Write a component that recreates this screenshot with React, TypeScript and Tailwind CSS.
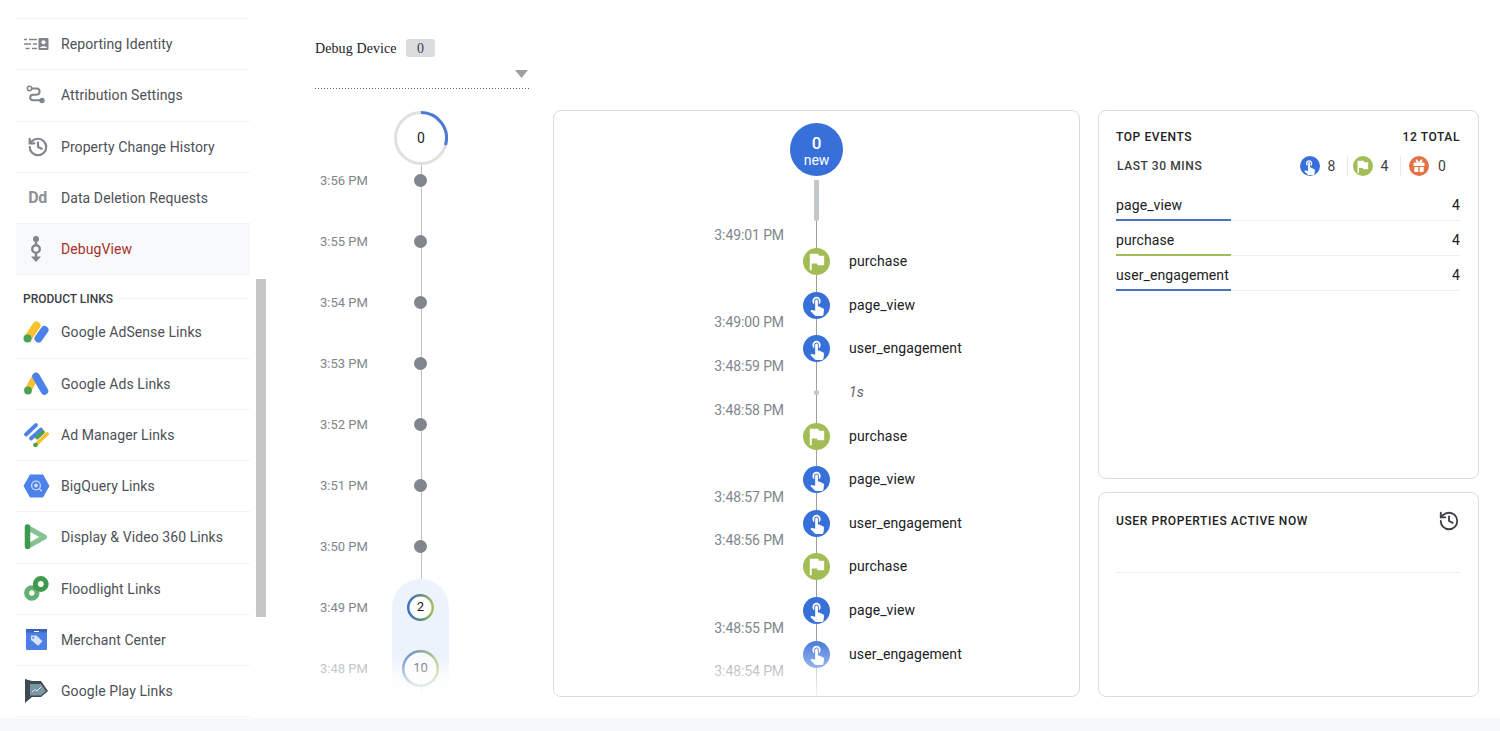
import React from "react";
import { MdTouchApp, MdFlag } from "react-icons/md";
import { History } from "lucide-react";

const rowCls = "flex h-[51.25px] items-center border-b border-[#f1f3f4]";

function ReportingIcon() {
  return (
    <svg width="26" height="14" viewBox="0 0 26 14">
      <g stroke="#80868b" strokeWidth="1.7">
        <path d="M1 2.5h3M6 2.5h8M1 7h7M10 7h4M2.5 11.5h4M9 11.5h5" />
      </g>
      <rect x="15.5" y="1" width="10" height="12" rx="1" fill="#80868b" />
      <circle cx="20.5" cy="5.2" r="2" fill="#fff" />
      <path d="M17 11c.4-2.4 6.6-2.4 7 0z" fill="#fff" />
    </svg>
  );
}
function AttributionIcon() {
  return (
    <svg width="20" height="20" viewBox="0 0 20 20" fill="none">
      <circle cx="3.5" cy="3.5" r="2.2" stroke="#80868b" strokeWidth="1.5" />
      <path d="M5.5 3.5h5a3 3 0 0 1 0 6.2H7a2.7 2.7 0 0 0 0 5.6h7" stroke="#80868b" strokeWidth="2" />
      <circle cx="16" cy="15.5" r="2.7" fill="#80868b" />
    </svg>
  );
}
function DebugIcon() {
  return (
    <svg width="12" height="26" viewBox="0 0 12 26" fill="none">
      <circle cx="6" cy="3" r="3" fill="#80868b" />
      <path d="M6 5v4M6 17.5v4" stroke="#80868b" strokeWidth="2.4" />
      <circle cx="6" cy="13" r="3.8" stroke="#80868b" strokeWidth="2.4" />
      <path d="M1 20.5h10L6 26z" fill="#80868b" />
    </svg>
  );
}
function AdSenseIcon() {
  return (
    <svg width="26" height="22" viewBox="0 0 26 22">
      <path d="M5 17 13.5 4.5" stroke="#f9c231" strokeWidth="8" strokeLinecap="round" />
      <path d="M15.5 17.5 21.5 9" stroke="#4c82ea" strokeWidth="8" strokeLinecap="round" />
      <circle cx="4.5" cy="17.5" r="4" fill="#4ba154" />
    </svg>
  );
}
function AdsIcon() {
  return (
    <svg width="26" height="24" viewBox="0 0 26 24">
      <path d="M13 4 5 18" stroke="#f9c231" strokeWidth="7" strokeLinecap="round" />
      <path d="M13 4.5 21.5 19" stroke="#4c82ea" strokeWidth="7.5" strokeLinecap="round" />
      <circle cx="5" cy="18.5" r="3.9" fill="#4ba154" />
    </svg>
  );
}
function AdManagerIcon() {
  return (
    <svg width="26" height="26" viewBox="0 0 26 26" strokeLinecap="round" fill="none">
      <path d="M3 12.5 13 3" stroke="#4c82ea" strokeWidth="3.8" />
      <path d="M8 16.5 18 7.5" stroke="#4c82ea" strokeWidth="3.8" />
      <path d="M14 15.5l6-5.5" stroke="#4ba154" strokeWidth="3.8" />
      <path d="M13 22.5 24 12" stroke="#f9c231" strokeWidth="3.8" />
      <circle cx="12.5" cy="23" r="2.3" fill="#4ba154" />
    </svg>
  );
}
function BigQueryIcon() {
  return (
    <svg width="27" height="24" viewBox="0 0 27 24" fill="none">
      <path d="M7 .5h13L26.5 12 20 23.5H7L.5 12z" fill="#4c82ea" />
      <circle cx="13" cy="11.5" r="4.4" stroke="#c9dafb" strokeWidth="1.3" />
      <circle cx="13" cy="11.5" r="1.9" fill="#c9dafb" />
      <path d="M16 14.5 18.8 17.2" stroke="#c9dafb" strokeWidth="1.4" />
    </svg>
  );
}
function DisplayIcon() {
  return (
    <svg width="24" height="26" viewBox="0 0 24 26" fill="none">
      <path d="M3.5 3.5 20.5 13 3.5 22.5z" fill="#fff" stroke="#86c295" strokeWidth="5" strokeLinejoin="round" />
      <path d="M3.5 3V22.5" stroke="#3f9a50" strokeWidth="5.5" strokeLinecap="round" />
    </svg>
  );
}
function FloodlightIcon() {
  return (
    <svg width="25" height="25" viewBox="0 0 25 25" fill="none">
      <circle cx="7.8" cy="17" r="5.2" stroke="#64b070" strokeWidth="5" />
      <circle cx="16.8" cy="8" r="5.4" stroke="#3f9a50" strokeWidth="5" />
      <path d="M9.5 12.5 12.5 9.5" stroke="#3f9a50" strokeWidth="3.5" />
    </svg>
  );
}
function MerchantIcon() {
  return (
    <svg width="21" height="21" viewBox="0 0 21 21">
      <rect x="0" y="0" width="21" height="21" rx="1" fill="#4c7fe4" />
      <rect x="0" y="0" width="21" height="3.5" fill="#3c64b8" />
      <rect x="8" y="2" width="5" height="1" fill="#fff" />
      <path d="M5 6.5h5.5l6 5.8-4.4 4.4L5 11z" fill="#d8e3f9" />
      <circle cx="7.3" cy="8.8" r="1" fill="#4c7fe4" />
    </svg>
  );
}
function PlayIcon() {
  return (
    <svg width="23" height="24" viewBox="0 0 23 24">
      <path d="M0 0 7 2h9l7 10-7 6H7L0 24z" fill="#3c4a52" />
      <path d="M5 5h11l5 7-5 4.5H5z" fill="#7d96a4" />
      <path d="M7 13l3-2.5 2 1.5 4-4" stroke="#dfe7ec" strokeWidth="1" fill="none" />
    </svg>
  );
}
function GiftIcon() {
  return (
    <svg width="14" height="14" viewBox="0 0 14 14" fill="#fff">
      <path d="M1.5 4.5a1 1 0 0 1 1-1h9a1 1 0 0 1 1 1V7h-11zM2.3 8h4v5H3.5a1.2 1.2 0 0 1-1.2-1.2zM7.7 8h4v3.8a1.2 1.2 0 0 1-1.2 1.2H7.7z" />
      <path d="M3.4 .8 5 .6 7 3 9 .6l1.6.2L9.4 3.8H4.6z" />
    </svg>
  );
}

const topItems: { label: string; icon: React.ReactNode; active?: boolean }[] = [
  { label: "Reporting Identity", icon: <ReportingIcon /> },
  { label: "Attribution Settings", icon: <AttributionIcon /> },
  { label: "Property Change History", icon: <History size={22} strokeWidth={2.4} className="ml-[4px] text-[#80868b]" /> },
  { label: "Data Deletion Requests", icon: <span className="ml-[3px] text-[16px] font-bold tracking-[-0.5px] text-[#8e9297]">Dd</span> },
  { label: "DebugView", icon: <DebugIcon />, active: true },
];
const linkItems: { label: string; icon: React.ReactNode }[] = [
  { label: "Google AdSense Links", icon: <AdSenseIcon /> },
  { label: "Google Ads Links", icon: <AdsIcon /> },
  { label: "Ad Manager Links", icon: <AdManagerIcon /> },
  { label: "BigQuery Links", icon: <BigQueryIcon /> },
  { label: "Display & Video 360 Links", icon: <DisplayIcon /> },
  { label: "Floodlight Links", icon: <FloodlightIcon /> },
  { label: "Merchant Center", icon: <MerchantIcon /> },
  { label: "Google Play Links", icon: <PlayIcon /> },
];

function NavRow({ label, icon, active }: { label: string; icon: React.ReactNode; active?: boolean }) {
  return (
    <div className={`${rowCls} ${active ? "bg-[#f8f9fa]" : ""}`}>
      <div className="mr-[5px] flex w-[40px] shrink-0 items-center justify-center">{icon}</div>
      <span className={`pt-[1px] text-[14px] tracking-[0.08px] ${active ? "text-[#a8312b]" : "text-[#4d5156]"}`}>{label}</span>
    </div>
  );
}

function Sidebar() {
  return (
    <div className="ml-4 w-[234px] shrink-0 pt-[18px]">
      <div className="border-t border-[#f1f3f4]">
        {topItems.map((i) => (
          <NavRow key={i.label} {...i} />
        ))}
      </div>
      <div className="relative h-[32px]">
        <div className="absolute left-0 right-0 top-[23px] h-px bg-[#f1f3f4]" />
        <span className="relative top-[16px] block w-fit bg-white pl-[7px] pr-1 text-[12px] font-medium leading-4 text-[#3c4043]">
          PRODUCT LINKS
        </span>
      </div>
      {linkItems.map((i) => (
        <NavRow key={i.label} {...i} />
      ))}
    </div>
  );
}

function TopRing() {
  return (
    <div className="relative flex h-[54px] w-[54px] items-center justify-center">
      <svg className="absolute inset-0" width="54" height="54" viewBox="0 0 54 54" fill="none">
        <circle cx="27" cy="27" r="25.5" stroke="#e0e0e0" strokeWidth="3" />
        <path d="M27 1.5A25.5 25.5 0 0 1 51.5 34" stroke="#4a7bd8" strokeWidth="3" />
      </svg>
      <span className="relative text-[14px] text-[#202124]">0</span>
    </div>
  );
}

function GradRing({ id, size, label, faded }: { id: string; size: number; label: string; faded?: boolean }) {
  const r = size / 2 - 1.25;
  return (
    <div className="relative flex items-center justify-center" style={{ width: size, height: size }}>
      <svg className={`absolute inset-0 ${faded ? "opacity-70" : ""}`} width={size} height={size} viewBox={`0 0 ${size} ${size}`} fill="none">
        <defs>
          <linearGradient id={id} x1="0" y1="0" x2="1" y2="0">
            <stop offset="0" stopColor="#3f6fc8" />
            <stop offset="0.5" stopColor="#5f8a80" />
            <stop offset="1" stopColor="#a3c05f" />
          </linearGradient>
        </defs>
        <circle cx={size / 2} cy={size / 2} r={r} fill="#fff" stroke={`url(#${id})`} strokeWidth="2.5" />
      </svg>
      <span className={`relative text-[13px] ${faded ? "text-[#5f6368]" : "text-[#202124]"}`}>{label}</span>
    </div>
  );
}

const minutes = ["3:56 PM", "3:55 PM", "3:54 PM", "3:53 PM", "3:52 PM", "3:51 PM", "3:50 PM"];

function MinuteRow({ time, faded, children }: { time: string; faded?: boolean; children: React.ReactNode }) {
  return (
    <div className="flex h-[61px] items-center">
      <span className={`w-[65.5px] shrink-0 pl-[5px] pt-[1px] text-[13px] ${faded ? "text-[#c4c7ca]" : "text-[#80868b]"}`}>{time}</span>
      <div className="relative flex w-[80px] justify-center">{children}</div>
    </div>
  );
}

function DeviceColumn() {
  return (
    <div className="ml-[65px] w-[216px] shrink-0 pt-[39px]">
      <div className="flex h-[18px] items-center font-['Liberation_Serif',serif] text-[14px] tracking-[0.1px] text-[#202124]">
        Debug Device
        <span className="ml-[9.5px] flex h-[18px] w-[29px] items-center justify-center rounded-[3px] bg-[#dadce0] text-[#3c4043]">0</span>
      </div>
      <div className="flex h-[31px] items-end justify-end pb-[10px] pr-[3px]">
        <svg width="13" height="8" viewBox="0 0 13 8">
          <path d="M0 0h13L6.5 8z" fill="#9aa0a6" />
        </svg>
      </div>
      <div className="h-px bg-[repeating-linear-gradient(to_right,#5f6368_0_1px,transparent_1px_3px)]" />
      <div className="relative mt-[22px]">
        <div className="absolute left-[105.5px] top-[54px] h-[530px] w-px bg-[#bdc1c6]" />
        <div className="absolute left-[77px] top-[468px] h-[117px] w-[57px] rounded-t-[29px] bg-gradient-to-b from-[#edf3fd] from-70% to-white/0" />
        <div className="relative ml-[79px] w-fit">
          <TopRing />
        </div>
        <div className="relative -mt-[15.5px]">
          {minutes.map((m) => (
            <MinuteRow key={m} time={m}>
              <div className="h-[13px] w-[13px] rounded-full bg-[#80868b]" />
            </MinuteRow>
          ))}
          <MinuteRow time="3:49 PM">
            <GradRing id="ring-a" size={27} label="2" />
          </MinuteRow>
          <MinuteRow time="3:48 PM" faded>
            <GradRing id="ring-b" size={37} label="10" faded />
          </MinuteRow>
        </div>
        <div className="absolute left-[77px] top-[545px] h-[40px] w-[57px] bg-gradient-to-b from-white/0 to-white" />
      </div>
    </div>
  );
}

type Kind = "touch" | "flag" | "gap";
const events: { kind: Kind; name: string }[] = [
  { kind: "flag", name: "purchase" },
  { kind: "touch", name: "page_view" },
  { kind: "touch", name: "user_engagement" },
  { kind: "gap", name: "1s" },
  { kind: "flag", name: "purchase" },
  { kind: "touch", name: "page_view" },
  { kind: "touch", name: "user_engagement" },
  { kind: "flag", name: "purchase" },
  { kind: "touch", name: "page_view" },
  { kind: "touch", name: "user_engagement" },
];
const times = ["3:49:01 PM", "", "3:49:00 PM", "3:48:59 PM", "3:48:58 PM", "", "3:48:57 PM", "3:48:56 PM", "", "3:48:55 PM", "3:48:54 PM"];

function EventDot({ kind }: { kind: Kind }) {
  if (kind === "gap") return <div className="h-[5px] w-[5px] rounded-full bg-[#c4c7ca]" />;
  if (kind === "flag")
    return (
      <div className="flex h-[27px] w-[27px] items-center justify-center rounded-full bg-[#a1bd53]">
        <MdFlag size={23} className="text-white" />
      </div>
    );
  return (
    <div className="flex h-[27px] w-[27px] items-center justify-center rounded-full bg-[#3870da]">
      <MdTouchApp size={22} className="text-white" />
    </div>
  );
}

function MainCard() {
  return (
    <div className="relative ml-[22px] mt-[110px] h-[587px] w-[527px] shrink-0 overflow-hidden rounded-[8px] border border-[#dadce0]">
      <div className="absolute left-[262px] top-[70px] h-[516px] w-px bg-[#9aa0a6]" />
      <div className="absolute left-[260px] top-[69px] h-[41px] w-[5px] rounded-b-[2px] bg-[#c4c7ca]" />
      <div className="relative flex justify-center pt-[12px]">
        <div className="flex h-[53px] w-[53px] flex-col items-center justify-center rounded-full bg-[#3870da] pt-[3px] text-white">
          <span className="text-[17px] font-medium leading-[17px]">0</span>
          <span className="text-[14px] leading-[16px]">new</span>
        </div>
      </div>
      <div className="relative flex">
        <div className="w-[230px] shrink-0 pt-[38px]">
          {times.map((t, i) => (
            <div key={i} className="flex h-[43.6px] items-center justify-end text-[14px] tracking-[-0.1px] text-[#80868b]">
              {t}
            </div>
          ))}
        </div>
        <div className="ml-[1px] pt-[64px]">
          {events.map((e, i) => (
            <div key={i} className="flex h-[43.6px] items-center">
              <div className="flex w-[63px] justify-center">
                <EventDot kind={e.kind} />
              </div>
              <span className={`ml-[1px] text-[14px] tracking-[0.1px] ${e.kind === "gap" ? "italic text-[#5f6368]" : "text-[#202124]"}`}>{e.name}</span>
            </div>
          ))}
        </div>
      </div>
      <div className="absolute bottom-0 left-0 h-[60px] w-[280px] bg-gradient-to-b from-white/0 to-white/90" />
    </div>
  );
}

function Stat({ color, icon, value, wide }: { color: string; icon: React.ReactNode; value: string; wide?: boolean }) {
  return (
    <div className="flex items-center">
      <div className={`flex h-5 w-5 items-center justify-center rounded-full ${color}`}>{icon}</div>
      <span className={`${wide ? "ml-[9px]" : "ml-[8px]"} w-[11px] text-[14px] text-[#3c4043]`}>{value}</span>
    </div>
  );
}

function TopEvents() {
  const rows = [
    { name: "page_view", bar: "bg-[#4a72bd]" },
    { name: "purchase", bar: "bg-[#a1bd53]" },
    { name: "user_engagement", bar: "bg-[#4a72bd]" },
  ];
  return (
    <div className="h-[369px] rounded-[8px] border border-[#dadce0] pl-[17px] pr-[18px]">
      <div className="flex items-center justify-between pt-[18px] text-[12px] font-medium leading-4 tracking-[0.6px] text-[#202124]">
        <span>TOP EVENTS</span>
        <span>12 TOTAL</span>
      </div>
      <div className="mt-[9px] flex h-[24px] items-center">
        <span className="pl-[1px] text-[12px] font-medium tracking-[0.6px] text-[#3c4043]">LAST 30 MINS</span>
        <div className="ml-auto mr-[11px] flex items-center">
          <Stat color="bg-[#3870da]" icon={<MdTouchApp size={17} className="text-white" />} value="8" />
          <div className="ml-[8px] mr-[5px] h-[20px] w-px bg-[#e8eaed]" />
          <Stat color="bg-[#a1bd53]" icon={<MdFlag size={17} className="text-white" />} value="4" />
          <div className="ml-[8px] mr-[8.5px] h-[20px] w-px bg-[#e8eaed]" />
          <Stat color="bg-[#e57245]" icon={<GiftIcon />} value="0" wide />
        </div>
      </div>
      <div className="mt-[8px]">
        {rows.map((r) => (
          <div key={r.name} className="relative flex h-[35px] items-center justify-between border-b border-[#eceeef] pt-[5px] text-[14px] tracking-[0.1px] text-[#202124]">
            <span>{r.name}</span>
            <span>4</span>
            <div className={`absolute -bottom-px left-0 h-[2px] w-[115px] ${r.bar}`} />
          </div>
        ))}
      </div>
    </div>
  );
}

function UserProps() {
  return (
    <div className="mt-[13px] h-[205px] rounded-[8px] border border-[#dadce0] pl-[17px] pr-[18px]">
      <div className="flex h-[80px] items-start justify-between border-b border-[#eceeef] pt-[18px]">
        <span className="pt-[2px] text-[12px] font-medium leading-4 tracking-[0.6px] text-[#202124]">USER PROPERTIES ACTIVE NOW</span>
        <History size={22} strokeWidth={2} className="-mt-[1px] text-[#3c4043]" />
      </div>
    </div>
  );
}

export default function App() {
  return (
    <div className="relative flex h-[731px] w-[1500px] flex-col overflow-hidden bg-white font-['Roboto',sans-serif]">
      <div className="flex h-[718px] shrink-0">
        <Sidebar />
        <DeviceColumn />
        <MainCard />
        <div className="ml-[18px] mt-[110px] w-[381px] shrink-0">
          <TopEvents />
          <UserProps />
        </div>
      </div>
      <div className="h-[13px] bg-[#f6f8fa]" />
      <div className="absolute left-[256px] top-[279px] h-[338px] w-[10px] bg-[#c6c6c6]" />
    </div>
  );
}
